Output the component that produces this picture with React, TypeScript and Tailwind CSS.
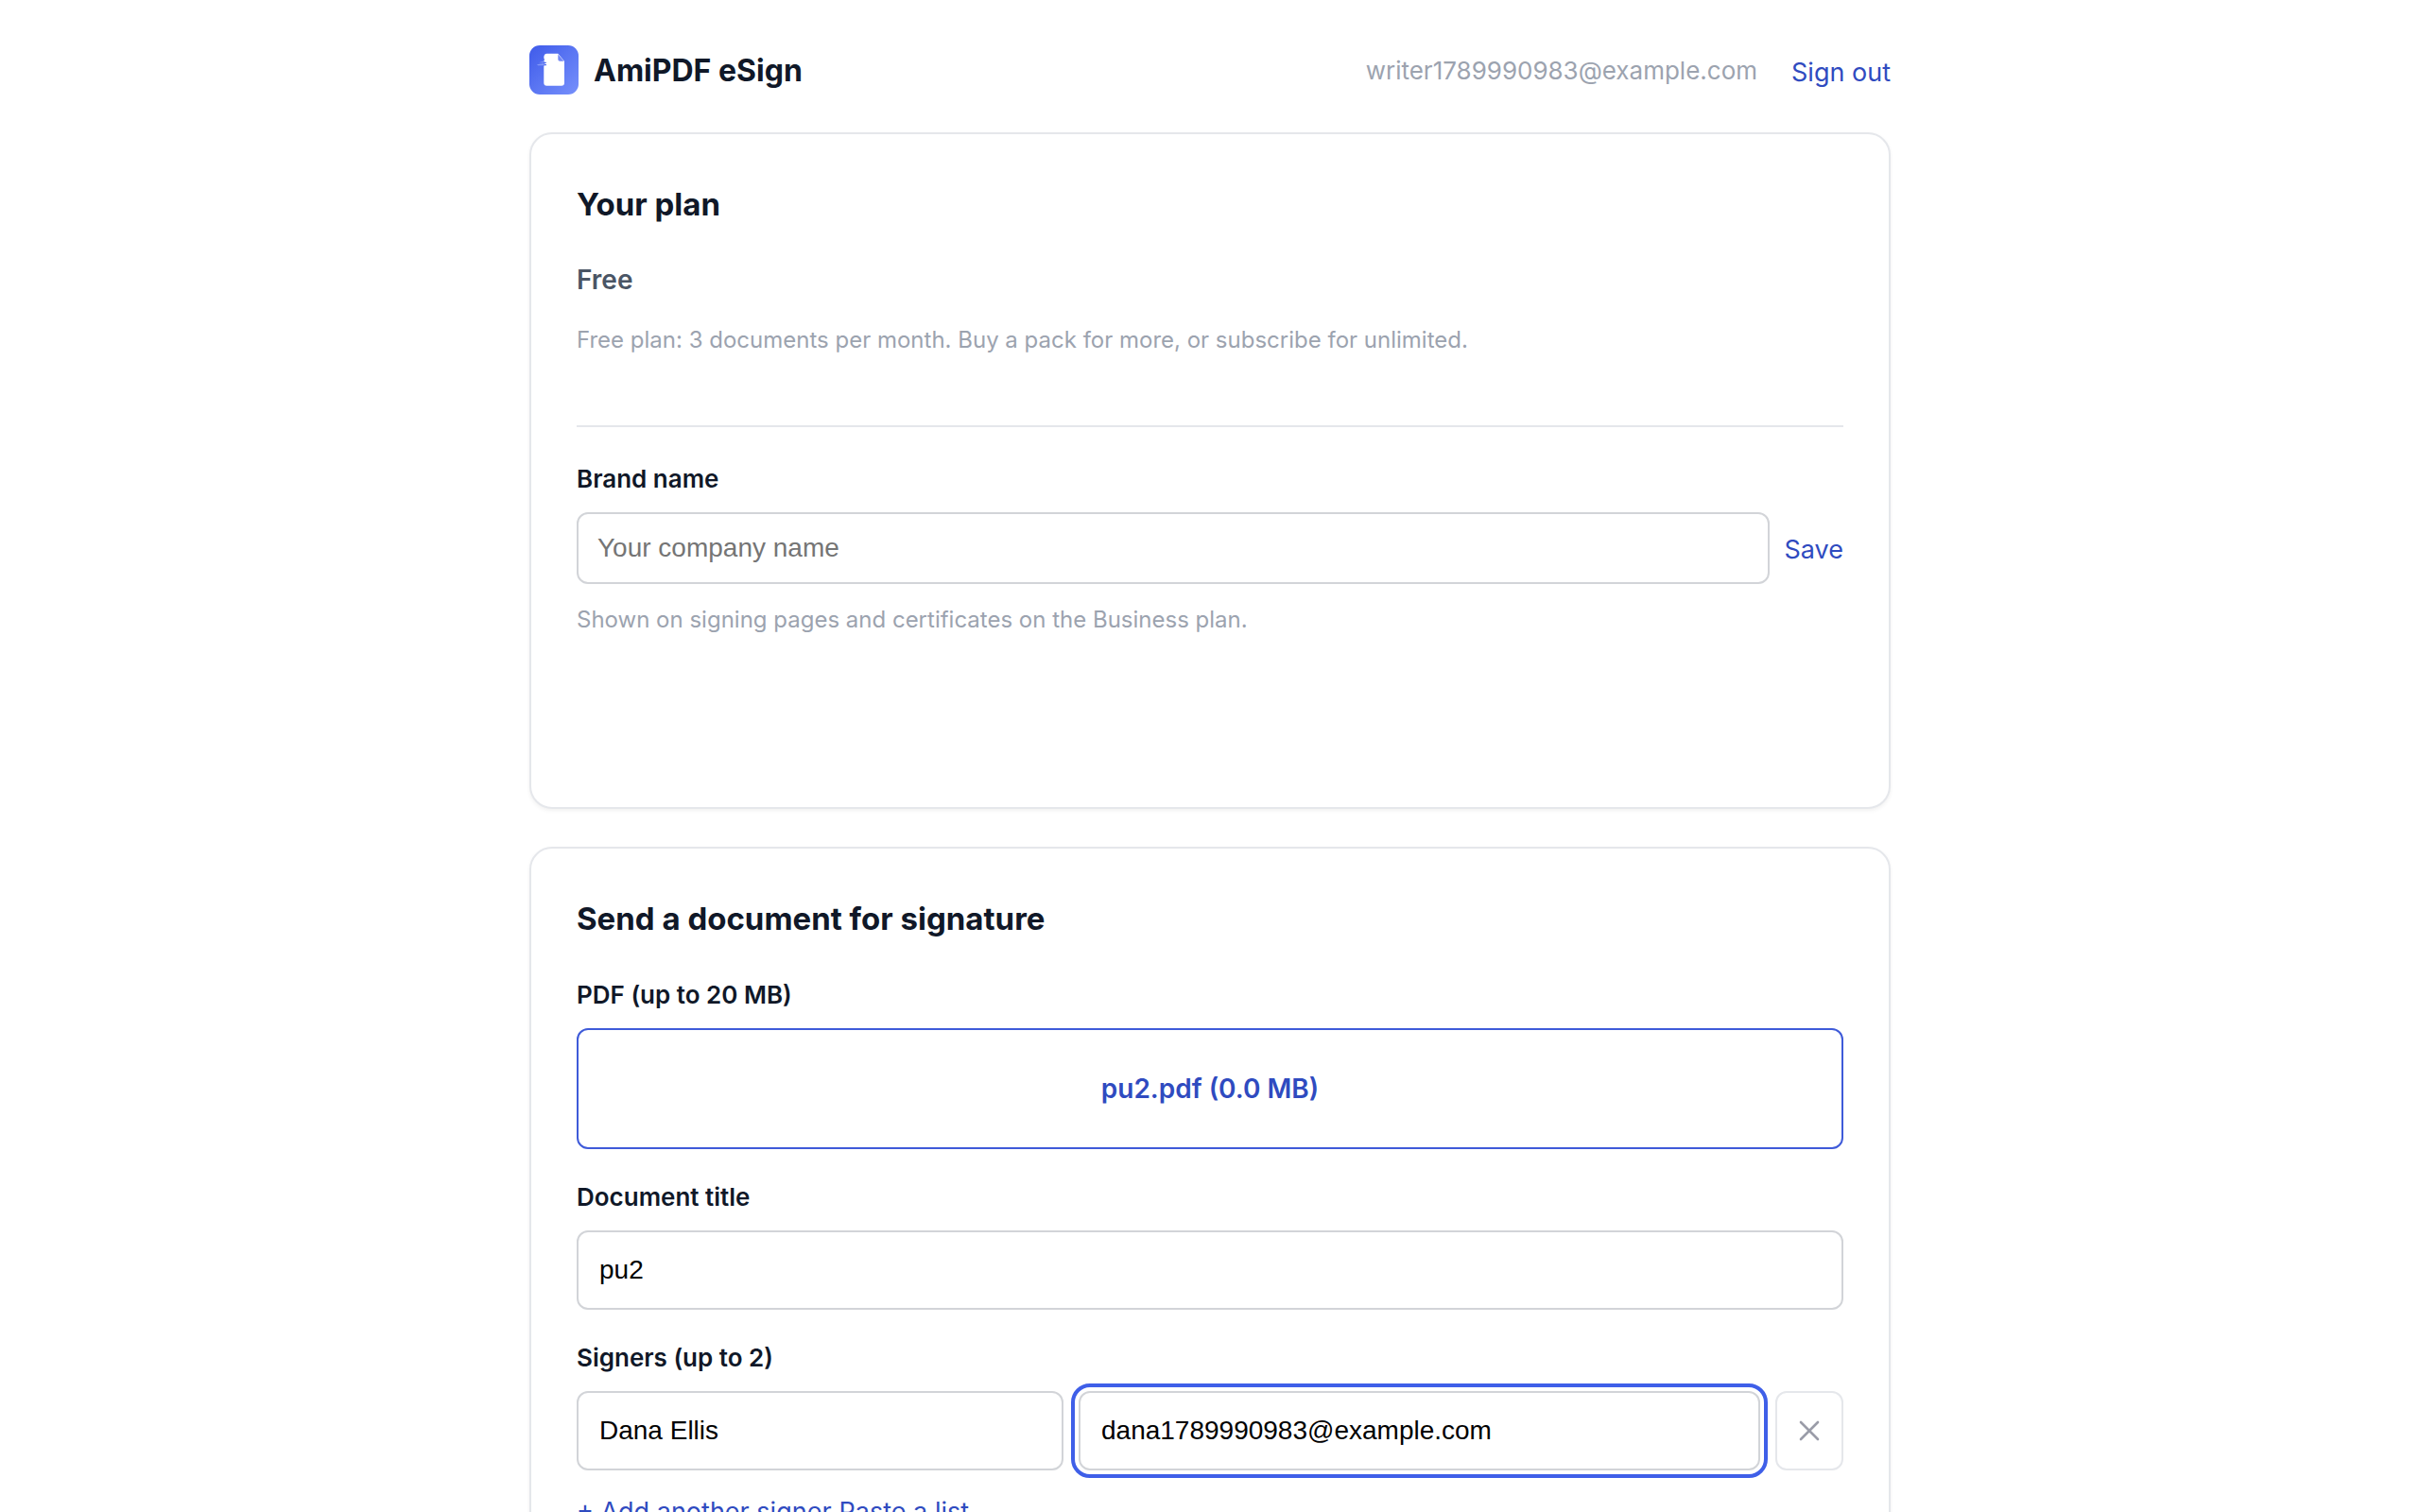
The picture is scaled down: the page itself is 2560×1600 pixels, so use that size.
import { ComponentProps, FormEvent, useState } from "react";
import { X } from "lucide-react";
import { twMerge } from "tailwind-merge";

interface CardProps {
  title: string;
  children: React.ReactNode;
}

function Logo() {
  return (
    <svg viewBox="0 0 52 52" className="size-13" aria-hidden="true">
      <defs>
        <linearGradient id="logo-bg" x1="0" y1="0" x2="1" y2="1">
          <stop offset="0" stopColor="#3f5bea" />
          <stop offset="1" stopColor="#7690fb" />
        </linearGradient>
      </defs>
      <rect width="52" height="52" rx="11" fill="url(#logo-bg)" />
      <path
        d="M18.500 8.700H30.300L37 16.700V39.700Q37 42.700 34 42.700H18.300Q15.300 42.700 15.300 39.700V22Q15.300 21.200 16.200 21.200H18V20H16.300V19H17.800V17.700H16.300Q15.300 17.400 15.300 16.500Q15.400 15.700 16.300 15.500Q15.300 14.500 15.300 12.500Q15.500 8.700 18.500 8.700Z"
        fill="#fff"
      />
      <path d="M30.300 9.500V14.700Q30.300 16.700 32.300 16.700H36.500Z" fill="#7388f5" />
      <path d="M8 20.200l7.500-1.200v2.200H9Z" fill="#8398f8" />
      <path d="M10 18.300l5-1.800v1.700Z" fill="#7c92f7" />
    </svg>
  );
}

function Card({ title, children }: CardProps) {
  return (
    <section className="rounded-3xl border-2 border-[#e5e7eb] bg-white p-12 shadow-[0_2px_4px_rgba(0,0,0,0.06)]">
      <h2 className="text-[33px] leading-[52px] font-bold text-gray-900">
        {title}
      </h2>
      {children}
    </section>
  );
}

function Label({ className, ...props }: ComponentProps<"label">) {
  return (
    <label
      className={twMerge(
        "block text-[26px] leading-[38px] font-semibold text-gray-900",
        className
      )}
      {...props}
    />
  );
}

function TextField({ className, ...props }: ComponentProps<"input">) {
  return (
    <input
      className={twMerge(
        "h-21 w-full min-w-0 rounded-xl border-2 border-[#d2d4d8] bg-white px-[22px] font-['Liberation_Sans',sans-serif] text-[28px] text-black outline-none placeholder:text-[#757575]",
        className
      )}
      {...props}
    />
  );
}

function LinkButton({ className, ...props }: ComponentProps<"button">) {
  return (
    <button
      type="button"
      className={twMerge(
        "cursor-pointer pt-1 text-[27px] leading-10 text-[#2f4bc0]",
        className
      )}
      {...props}
    />
  );
}

export default function App() {
  const [brand, setBrand] = useState("");
  const [title, setTitle] = useState("pu2");
  const [name, setName] = useState("Dana Ellis");
  const [email, setEmail] = useState("dana1789990983@example.com");

  function saveBrand(event: FormEvent<HTMLFormElement>) {
    event.preventDefault();
  }

  return (
    <div className="h-screen overflow-hidden bg-white font-['Inter',sans-serif]">
      <div className="mx-auto max-w-[1440px]">
        <header className="flex items-center justify-between pt-12 pb-10">
          <div className="flex items-center gap-4">
            <Logo />
            <h1 className="pt-0.5 text-[32px] leading-10 font-bold text-gray-900">
              AmiPDF eSign
            </h1>
          </div>
          <div className="flex items-center gap-9 pt-0.5">
            <span className="text-[26px] leading-10 text-[#9ca3af]">
              writer1789990983@example.com
            </span>
            <LinkButton>Sign out</LinkButton>
          </div>
        </header>

        <main className="space-y-10">
          <Card title="Your plan">
            <p className="mt-[34px] text-[28px] leading-10 font-semibold text-gray-600">
              Free
            </p>
            <p className="mt-6 text-2xl leading-10 text-[#9ca3af]">
              Free plan: 3 documents per month. Buy a pack for more, or
              subscribe for unlimited.
            </p>

            <form
              onSubmit={saveBrand}
              className="mt-[70px] border-t-2 border-[#e5e7eb] pt-9 pb-[130px]"
            >
              <Label htmlFor="brand">Brand name</Label>
              <div className="mt-4 flex items-center gap-4">
                <TextField
                  id="brand"
                  className="h-19 flex-1 px-5"
                  placeholder="Your company name"
                  value={brand}
                  onChange={(event) => setBrand(event.target.value)}
                />
                <LinkButton type="submit">Save</LinkButton>
              </div>
              <p className="mt-[18px] text-2xl leading-10 text-[#9ca3af]">
                Shown on signing pages and certificates on the Business plan.
              </p>
            </form>
          </Card>

          <Card title="Send a document for signature">
            <Label htmlFor="file" className="mt-9">
              PDF (up to 20 MB)
            </Label>
            <label
              htmlFor="file"
              className="mt-4 flex h-32 cursor-pointer items-center justify-center rounded-xl border-2 border-[#3f5bd9] text-[28px] leading-10 font-semibold text-[#2f4bc0]"
            >
              pu2.pdf (0.0 MB)
              <input
                id="file"
                type="file"
                accept="application/pdf"
                className="sr-only"
              />
            </label>

            <Label htmlFor="title" className="mt-8">
              Document title
            </Label>
            <TextField
              id="title"
              className="mt-4"
              value={title}
              onChange={(event) => setTitle(event.target.value)}
            />

            <Label htmlFor="signer-name" className="mt-8">
              Signers (up to 2)
            </Label>
            <div className="mt-4 grid grid-cols-[1fr_1.4fr_72px] gap-4">
              <TextField
                id="signer-name"
                value={name}
                onChange={(event) => setName(event.target.value)}
              />
              <TextField
                type="email"
                aria-label="Signer email"
                className="outline-4 outline-offset-4 outline-[#3f5fe8] outline-solid"
                value={email}
                onChange={(event) => setEmail(event.target.value)}
              />
              <button
                type="button"
                aria-label="Remove signer"
                className="flex cursor-pointer items-center justify-center rounded-xl border-2 border-[#e5e7eb] text-[#9a9ca8]"
              >
                <X className="size-9" strokeWidth={1.75} />
              </button>
            </div>
            <div className="mt-5 flex gap-2">
              <LinkButton>+ Add another signer</LinkButton>
              <LinkButton>Paste a list</LinkButton>
            </div>
          </Card>
        </main>
      </div>
    </div>
  );
}
